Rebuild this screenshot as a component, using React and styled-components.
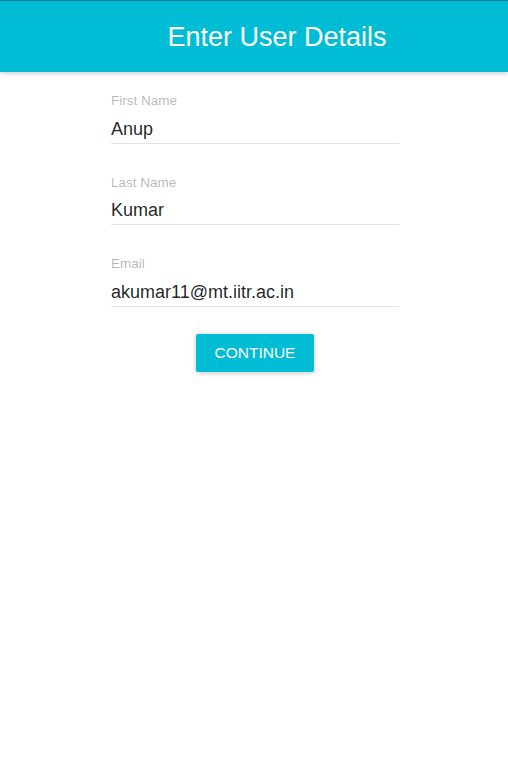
import React from "react";
import styled, { createGlobalStyle } from "styled-components";

const GlobalStyle = createGlobalStyle`
  body {
    margin: 0;
    background: #ffffff;
    font-family: "Liberation Sans", Arial, sans-serif;
  }
`;

const Page = styled.div`
  min-height: 762px;
  background: #ffffff;
`;

const AppBar = styled.header`
  height: 72px;
  box-sizing: border-box;
  border-top: 1px solid #167f8f;
  background-color: #00bcd4;
  box-shadow: 0 1px 6px rgba(0, 0, 0, 0.12), 0 1px 4px rgba(0, 0, 0, 0.12);
  display: flex;
  align-items: center;
  padding: 2px 24px 0 70px;
`;

const Title = styled.h1`
  flex: 1;
  margin: 0;
  text-align: center;
  color: #ffffff;
  font-size: 27px;
  font-weight: 400;
`;

const Form = styled.div`
  width: 288px;
  margin: 0 0 0 calc(50% - 143px);
  padding-top: 21px;
  display: flex;
  flex-direction: column;
  gap: 31px;
`;

const Field = styled.div`
  display: flex;
  flex-direction: column;
`;

const Label = styled.label`
  font-size: 13.5px;
  line-height: 16px;
  color: rgba(0, 0, 0, 0.3);
  margin-bottom: 8.5px;
`;

const Value = styled.div`
  font-size: 18px;
  line-height: 22px;
  padding-bottom: 3px;
  color: rgba(0, 0, 0, 0.87);
  border-bottom: 1px solid #e0e0e0;
`;

const Actions = styled.div`
  display: flex;
  justify-content: center;
  margin-top: -4px;
`;

const Button = styled.button`
  height: 38px;
  padding: 0 19px;
  border: none;
  border-radius: 2px;
  background-color: #00bcd4;
  color: #ffffff;
  font-family: "Liberation Sans", Arial, sans-serif;
  font-size: 15.5px;
  text-transform: uppercase;
  box-shadow: 0 1px 6px rgba(0, 0, 0, 0.12), 0 1px 4px rgba(0, 0, 0, 0.12);
  cursor: pointer;
`;

const fields = [
  { label: "First Name", value: "Anup" },
  { label: "Last Name", value: "Kumar" },
  { label: "Email", value: "akumar11@mt.iitr.ac.in" },
];

const App = () => {
  return (
    <Page>
      <GlobalStyle />
      <AppBar>
        <Title>Enter User Details</Title>
      </AppBar>
      <Form>
        {fields.map((f) => (
          <Field key={f.label}>
            <Label>{f.label}</Label>
            <Value>{f.value}</Value>
          </Field>
        ))}
        <Actions>
          <Button>Continue</Button>
        </Actions>
      </Form>
    </Page>
  );
};

export default App;
